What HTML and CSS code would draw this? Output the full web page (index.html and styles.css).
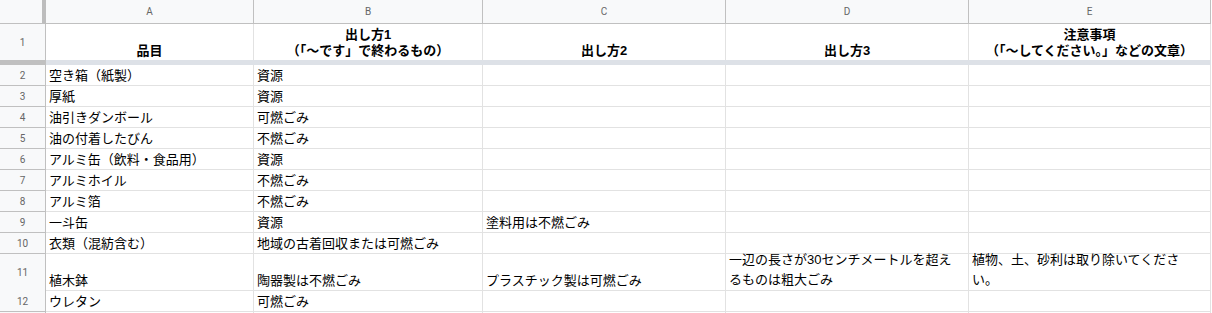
FILE: index.html
```html
<!DOCTYPE html>
<html lang="ja">
<head>
  <meta charset="UTF-8">
  <title>分別表</title>
  <link rel="stylesheet" href="styles.css">
</head>
<body>
  <div class="sheet">
    <!-- 列見出し -->
    <div class="corner"></div>
    <div class="col-head">A</div>
    <div class="col-head">B</div>
    <div class="col-head">C</div>
    <div class="col-head">D</div>
    <div class="col-head">E</div>

    <!-- 1行目（固定行） -->
    <div class="row-head tall">1</div>
    <div class="cell hdr">品目</div>
    <div class="cell hdr">出し方1<br>（「〜です」で終わるもの）</div>
    <div class="cell hdr">出し方2</div>
    <div class="cell hdr">出し方3</div>
    <div class="cell hdr">注意事項<br>（「〜してください。」などの文章）</div>

    <!-- 固定線 -->
    <div class="freeze freeze-head"></div>
    <div class="freeze"></div>
    <div class="freeze"></div>
    <div class="freeze"></div>
    <div class="freeze"></div>
    <div class="freeze"></div>

    <div class="row-head">2</div>
    <div class="cell">空き箱（紙製）</div>
    <div class="cell">資源</div>
    <div class="cell"></div>
    <div class="cell"></div>
    <div class="cell"></div>

    <div class="row-head">3</div>
    <div class="cell">厚紙</div>
    <div class="cell">資源</div>
    <div class="cell"></div>
    <div class="cell"></div>
    <div class="cell"></div>

    <div class="row-head">4</div>
    <div class="cell">油引きダンボール</div>
    <div class="cell">可燃ごみ</div>
    <div class="cell"></div>
    <div class="cell"></div>
    <div class="cell"></div>

    <div class="row-head">5</div>
    <div class="cell">油の付着したびん</div>
    <div class="cell">不燃ごみ</div>
    <div class="cell"></div>
    <div class="cell"></div>
    <div class="cell"></div>

    <div class="row-head">6</div>
    <div class="cell">アルミ缶（飲料・食品用）</div>
    <div class="cell">資源</div>
    <div class="cell"></div>
    <div class="cell"></div>
    <div class="cell"></div>

    <div class="row-head">7</div>
    <div class="cell">アルミホイル</div>
    <div class="cell">不燃ごみ</div>
    <div class="cell"></div>
    <div class="cell"></div>
    <div class="cell"></div>

    <div class="row-head">8</div>
    <div class="cell">アルミ箔</div>
    <div class="cell">不燃ごみ</div>
    <div class="cell"></div>
    <div class="cell"></div>
    <div class="cell"></div>

    <div class="row-head">9</div>
    <div class="cell">一斗缶</div>
    <div class="cell">資源</div>
    <div class="cell">塗料用は不燃ごみ</div>
    <div class="cell"></div>
    <div class="cell"></div>

    <div class="row-head">10</div>
    <div class="cell">衣類（混紡含む）</div>
    <div class="cell">地域の古着回収または可燃ごみ</div>
    <div class="cell"></div>
    <div class="cell"></div>
    <div class="cell"></div>

    <div class="row-head tall">11</div>
    <div class="cell">植木鉢</div>
    <div class="cell">陶器製は不燃ごみ</div>
    <div class="cell">プラスチック製は可燃ごみ</div>
    <div class="cell wrap">一辺の長さが30センチメートルを超え<br>るものは粗大ごみ</div>
    <div class="cell wrap">植物、土、砂利は取り除いてくださ<br>い。</div>

    <div class="row-head">12</div>
    <div class="cell">ウレタン</div>
    <div class="cell">可燃ごみ</div>
    <div class="cell"></div>
    <div class="cell"></div>
    <div class="cell"></div>

    <!-- 13行目（画面下端で切れる） -->
    <div class="row-head"></div>
    <div class="cell"></div>
    <div class="cell"></div>
    <div class="cell"></div>
    <div class="cell"></div>
    <div class="cell"></div>
  </div>
</body>
</html>
```

FILE: styles.css
```css
html, body {
  margin: 0;
  padding: 0;
  overflow: hidden;
  background: #ffffff;
}

* {
  box-sizing: border-box;
}

.sheet {
  display: grid;
  grid-template-columns: 46px 208px 229px 243px 243px 242px;
  grid-template-rows: 24px 36px 5px repeat(9, 21px) 37px 21px 21px;
  font-family: "Liberation Sans", Arial, "Noto Sans CJK JP", sans-serif;
  font-size: 13px;
  color: #000000;
}

/* 列・行見出し */
.corner,
.col-head,
.row-head {
  background: #f8f9fa;
  color: #666666;
  font-family: Roboto, "Liberation Sans", sans-serif;
  font-size: 10px;
  display: flex;
  align-items: center;
  justify-content: center;
}

.corner {
  border-right: 4px solid #bdbdbd;
  border-bottom: 1px solid #c0c0c0;
}

.col-head {
  border-right: 1px solid #c0c0c0;
  border-bottom: 1px solid #c0c0c0;
}

.row-head {
  border-right: 1px solid #c0c0c0;
  border-bottom: 1px solid #c0c0c0;
}

.row-head.tall {
  border-bottom: none;
}

/* セル */
.cell {
  border-right: 1px solid #e2e2e2;
  border-bottom: 1px solid #e2e2e2;
  padding: 0 3px 1px;
  line-height: 17px;
  white-space: nowrap;
  overflow: visible;
  display: flex;
  align-items: flex-end;
}

.cell.hdr {
  border-bottom: none;
  font-weight: bold;
  text-align: center;
  justify-content: center;
  line-height: 16px;
  padding-bottom: 1px;
}

.cell.wrap {
  line-height: 20px;
  padding-bottom: 0;
}

/* 固定行の区切り */
.freeze {
  background: #dde1e7;
}

.freeze-head {
  background: #c0c0c0;
}
```
